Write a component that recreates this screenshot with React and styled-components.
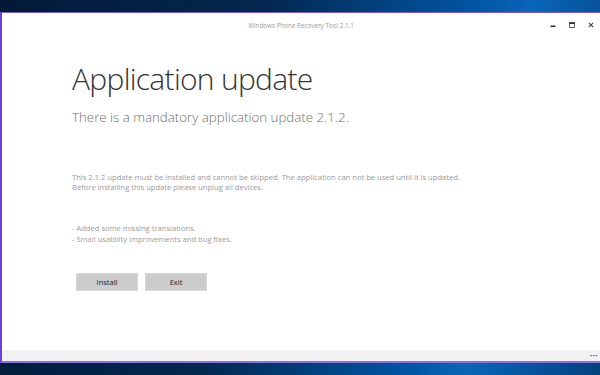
import styled, { createGlobalStyle } from "styled-components";

const Global = createGlobalStyle`
    html, body {
        margin: 0;
        padding: 0;
        width: 600px;
        height: 375px;
        overflow: hidden;
    }
    body {
        font-family: "Open Sans", "Noto Sans", sans-serif;
    }
`;

export default function App(){
    return(
        <>
        <Global/>
        <DESKTOP>
            <WINDOW>
                <TITLEBAR>
                    <TITLE>Windows Phone Recovery Tool 2.1.1</TITLE>
                    <CONTROLS>
                        <CTRL aria-label="minimize">
                            <svg width="6" height="6" viewBox="0 0 6 6"><rect x="0.5" y="3.5" width="5" height="1.6" fill="#333"/></svg>
                        </CTRL>
                        <CTRL aria-label="maximize">
                            <svg width="6" height="6" viewBox="0 0 6 6"><rect x="0.5" y="0.5" width="5" height="5" fill="none" stroke="#555" strokeWidth="0.9"/><rect x="0.5" y="0.5" width="5" height="1.5" fill="#333"/></svg>
                        </CTRL>
                        <CTRL aria-label="close">
                            <svg width="6" height="6" viewBox="0 0 6 6"><path d="M0.8 0.8 L5.2 5.2 M5.2 0.8 L0.8 5.2" stroke="#444" strokeWidth="1.1"/></svg>
                        </CTRL>
                    </CONTROLS>
                </TITLEBAR>
                <CONTENT>
                    <HEADING>Application update</HEADING>
                    <SUB>There is a mandatory application update 2.1.2.</SUB>
                    <TEXT>
                        This 2.1.2 update must be installed and cannot be skipped. The application can not be used until it is updated.<br/>
                        Before installing this update please unplug all devices.
                    </TEXT>
                    <NOTES>
                        - Added some missing translations.<br/>
                        - Small usability improvements and bug fixes.
                    </NOTES>
                    <BUTTONS>
                        <BUTTON>Install</BUTTON>
                        <BUTTON>Exit</BUTTON>
                    </BUTTONS>
                </CONTENT>
                <APPBAR>
                    <DOTS>•••</DOTS>
                </APPBAR>
            </WINDOW>
        </DESKTOP>
        </>
    );
}

const DESKTOP = styled.div`
    width: 600px;
    height: 375px;
    padding-top: 12px;
    box-sizing: border-box;
    background: linear-gradient(100deg, #021a38 0%, #03284f 40%, #0054a0 70%, #0a66b8 80%, #03417e 100%);
`;
const WINDOW = styled.div`
    height: 351px;
    box-sizing: border-box;
    border-top: 1px solid #7b5ad8;
    border-left: 2px solid #6a3ee0;
    border-bottom: 2px solid #8a72e0;
    background: #ffffff;
    display: flex;
    flex-direction: column;
`;
const TITLEBAR = styled.div`
    height: 24px;
    display: flex;
    align-items: center;
    justify-content: center;
    position: relative;
`;
const TITLE = styled.div`
    font-size: 6.3px;
    color: #9a9a9a;
    margin-top: 1px;
`;
const CONTROLS = styled.div`
    position: absolute;
    right: 6px;
    top: 9px;
    display: flex;
    gap: 13px;
`;
const CTRL = styled.div`
    width: 6px;
    height: 6px;
    display: flex;
`;
const CONTENT = styled.div`
    flex: 1;
    padding-left: 70px;
    padding-top: 24px;
`;
const HEADING = styled.h1`
    margin: 0;
    font-weight: 300;
    font-size: 30px;
    line-height: 36px;
    color: #333333;
    letter-spacing: -0.7px;
`;
const SUB = styled.h2`
    margin: 11px 0 0 0;
    font-weight: 300;
    font-size: 13.3px;
    line-height: 18px;
    color: #6e6e6e;
`;
const TEXT = styled.p`
    margin: 46px 0 0 0;
    font-size: 7.6px;
    line-height: 10px;
    color: #9a9a9a;
`;
const NOTES = styled.p`
    margin: 31px 0 0 0;
    font-size: 7.6px;
    line-height: 11px;
    color: #9a9a9a;
`;
const BUTTONS = styled.div`
    display: flex;
    gap: 7px;
    margin: 28px 0 0 4px;
`;
const BUTTON = styled.button`
    width: 62px;
    height: 18px;
    border: 1px solid #d8d8d8;
    background: #cccccc;
    color: #222222;
    font-family: "Open Sans", sans-serif;
    font-size: 7.5px;
    padding: 0;
`;
const APPBAR = styled.div`
    height: 11px;
    background: #f2f2f2;
    display: flex;
    justify-content: flex-end;
    align-items: center;
    padding-right: 2px;
`;
const DOTS = styled.span`
    font-size: 6px;
    letter-spacing: 0.5px;
    color: #333333;
`;
